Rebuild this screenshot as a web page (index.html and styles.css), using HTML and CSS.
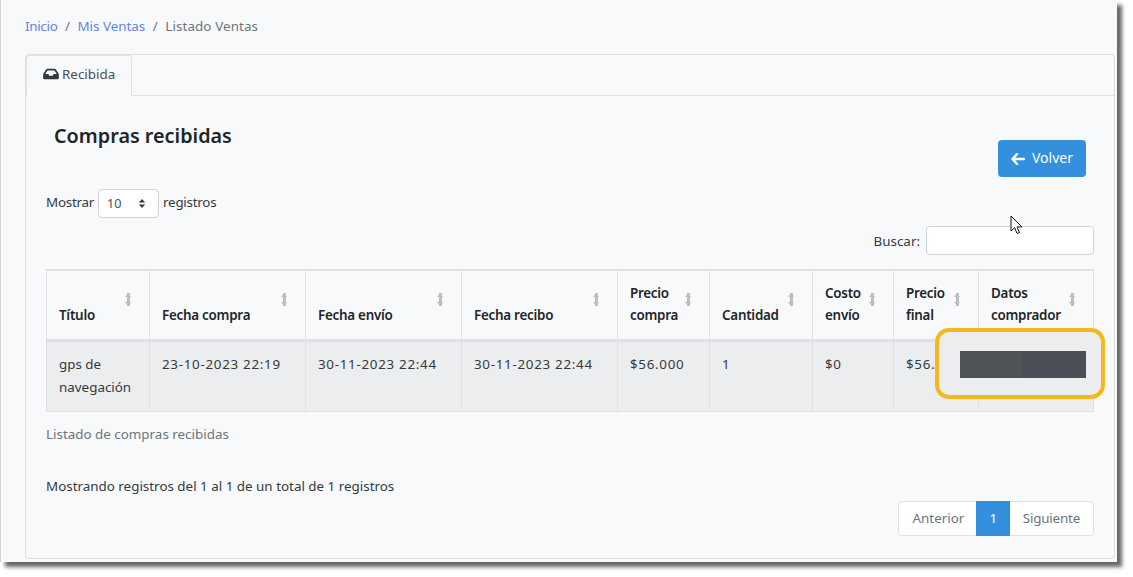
FILE: index.html
```html
<!DOCTYPE html>
<html lang="es">
<head>
<meta charset="utf-8">
<title>Listado Ventas</title>
<link rel="stylesheet" href="styles.css">
</head>
<body>
<main class="frame">
  <nav class="crumbs"><a class="first" href="#">Inicio</a><span class="sep">/</span><a href="#">Mis Ventas</a><span class="sep">/</span><span class="cur">Listado Ventas</span></nav>
  <section class="card">
    <div class="tabs">
      <div class="tab">
        <svg class="tab-ico" viewBox="0 0 576 512"><path d="M567.9 243.1L462.7 85.3A48 48 0 0 0 422.7 64H153.3a48 48 0 0 0-40 21.4L8.1 243.1A48 48 0 0 0 0 269.7V400a48 48 0 0 0 48 48h480a48 48 0 0 0 48-48V269.7a48 48 0 0 0-8.1-26.6zM162.9 128h250.3l85.3 128H384l-32 64H224l-32-64H77.5z" fill="currentColor"/></svg>
        <span>Recibida</span>
      </div>
    </div>
    <div class="body">
      <div class="head-row">
        <h2 class="title">Compras recibidas</h2>
        <button class="back">
          <svg class="back-ico" viewBox="0 0 14 12"><path d="M6 1L1.5 6 6 11M2 6h11" fill="none" stroke="currentColor" stroke-width="2.4" stroke-linecap="round" stroke-linejoin="round"/></svg>
          <span>Volver</span>
        </button>
      </div>
      <div class="length"><span class="lbl">Mostrar</span>
        <div class="select"><span>10</span>
          <svg class="sel-ico" viewBox="0 0 10 12"><path d="M5 .5L9 4.6H1zM5 11.5L1 7.4h8z" fill="currentColor"/></svg>
        </div>
        <span class="lbl">registros</span></div>
      <div class="search"><label>Buscar:</label><div class="input"></div></div>
      <table class="grid">
        <colgroup>
          <col class="c1"><col class="c2"><col class="c2"><col class="c2"><col class="c3"><col class="c4"><col class="c5"><col class="c6"><col class="c7">
        </colgroup>
        <thead>
          <tr>
            <th><div class="th"><span>Título</span><i class="sort"></i></div></th>
            <th><div class="th"><span>Fecha compra</span><i class="sort"></i></div></th>
            <th><div class="th"><span>Fecha envío</span><i class="sort"></i></div></th>
            <th><div class="th"><span>Fecha recibo</span><i class="sort"></i></div></th>
            <th><div class="th"><span>Precio<br>compra</span><i class="sort"></i></div></th>
            <th><div class="th"><span>Cantidad</span><i class="sort"></i></div></th>
            <th><div class="th"><span>Costo<br>envío</span><i class="sort"></i></div></th>
            <th><div class="th"><span>Precio<br>final</span><i class="sort"></i></div></th>
            <th><div class="th"><span>Datos<br>comprador</span><i class="sort"></i></div></th>
          </tr>
        </thead>
        <tbody>
          <tr>
            <td>gps de<br>navegación</td>
            <td class="num">23-10-2023 22:19</td>
            <td class="num">30-11-2023 22:44</td>
            <td class="num">30-11-2023 22:44</td>
            <td class="num">$56.000</td>
            <td>1</td>
            <td class="num">$0</td>
            <td class="num clip">$56.000</td>
            <td></td>
          </tr>
        </tbody>
      </table>
      <p class="caption">Listado de compras recibidas</p>
      <p class="info">Mostrando registros del 1 al 1 de un total de 1 registros</p>
      <div class="pager-row">
        <div class="pager"><span class="pg prev">Anterior</span><span class="pg on">1</span><span class="pg next">Siguiente</span></div>
      </div>
    </div>
  </section>
  <div class="mark"></div>
  <div class="redact"></div>
  <svg class="cursor" viewBox="0 0 13 20"><path d="M1 1v15l3.6-3.3 2.5 5.8 2.4-1-2.5-5.6h4.9z" fill="#fff" stroke="#111" stroke-width="1"/></svg>
</main>
</body>
</html>
```
FILE: styles.css
```css
* { box-sizing: border-box; }
html, body { margin: 0; padding: 0; background: #fff; }
body { width: 1133px; height: 577px; overflow: hidden; font-family: "Noto Sans", sans-serif; font-size: 13.4px; color: #343a40; }
.frame { position: relative; width: 1117px; height: 562px; background: #f8f9fb; border-left: 1px solid #d4d4d6; padding: 16px 2px 0 24px; box-shadow: 5px 5px 4px #666; }
.crumbs { height: 20px; line-height: 20px; display: flex; color: #6c757d; }
.crumbs a { color: #5f85e0; text-decoration: none; }
.crumbs .first { letter-spacing: -.3px; }
.crumbs .cur { letter-spacing: .1px; }
.sep { margin: 0 7.5px; color: #6c757d; }
.card { margin-top: 18px; height: 505px; border: 1px solid #dcdee2; border-radius: 4px; }
.tabs { height: 41px; border-bottom: 1px solid #dee2e6; display: flex; }
.tab { width: 106px; height: 41px; border: 1px solid #dee2e6; border-bottom-color: #f8f9fb; border-radius: 4px 4px 0 0; display: flex; align-items: center; padding-left: 16px; padding-bottom: 4px; gap: 3px; color: #495057; }
.tab-ico { width: 16px; height: 14px; color: #343a40; }
.body { padding: 0 20px 0 20px; }
.head-row { height: 92px; display: flex; justify-content: space-between; padding: 26px 8px 0 8px; }
.title { margin: 0; font-size: 19.8px; font-weight: 600; line-height: 28px; color: #212529; }
.back { margin-top: 18px; width: 88px; height: 37px; padding-bottom: 4px; background: #3490dc; border: 0; border-radius: 4px; color: #fff; font: inherit; font-size: 14px; display: flex; align-items: center; justify-content: center; gap: 7px; }
.back-ico { width: 14px; height: 12px; margin-top: 4px; }
.length { height: 29px; display: flex; align-items: flex-start; gap: 4px; color: #343a40; }
.lbl { line-height: 28px; letter-spacing: -.25px; }
.select { width: 61px; height: 29px; margin-top: 1px; border: 1px solid #ced4da; border-radius: 4px; background: #fff; display: flex; align-items: center; justify-content: space-between; padding: 0 12px 0 8px; color: #495057; font-size: 12.6px; }
.sel-ico { width: 8px; height: 11px; color: #343a40; }
.search { margin-top: 9px; height: 29px; display: flex; justify-content: flex-end; align-items: center; gap: 6px; }
.input { width: 168px; height: 29px; border: 1px solid #ced4da; border-radius: 4px; background: #fff; }
.grid { margin-top: 14px; width: 1047px; table-layout: fixed; border-collapse: collapse; border: 1px solid #dee2e6; border-top: 2px solid #dee2e6; }
.c1 { width: 103px; } .c2 { width: 156px; } .c3 { width: 92px; } .c4 { width: 103px; } .c5 { width: 81px; } .c6 { width: 85px; } .c7 { width: 115px; }
.grid th { height: 69px; padding: 11px 12px 13px; vertical-align: bottom; border: 1px solid #dee2e6; border-bottom: 3px solid #dee2e6; font-weight: 600; text-align: left; line-height: 22px; color: #212529; letter-spacing: -.25px; }
.th { display: flex; justify-content: space-between; align-items: flex-end; position: relative; }
.sort { position: absolute; right: 5px; bottom: 20px; width: 7px; height: 13px; background: linear-gradient(#bcbfc2, #bcbfc2) center/3px 100% no-repeat; }
.sort::before, .sort::after { content: ""; position: absolute; left: 0; border-left: 3.5px solid transparent; border-right: 3.5px solid transparent; }
.sort::before { top: 0; border-bottom: 4px solid #bcbfc2; }
.sort::after { bottom: 0; border-top: 4px solid #bcbfc2; }
.grid td { height: 69px; padding: 11px 12px 12px; vertical-align: top; background: #ecedef; border: 1px solid #dee2e6; line-height: 23px; }
.grid td.num { letter-spacing: .7px; }
.clip { white-space: nowrap; }
.caption { margin: 12px 0 0; height: 20px; line-height: 20px; color: #6c757d; }
.info { margin: 32px 0 0; height: 20px; line-height: 20px; color: #343a40; }
.pager-row { margin-top: 5px; display: flex; justify-content: flex-end; }
.pager { height: 35px; display: flex; border: 1px solid #dee2e6; border-radius: 4px; background: #fff; color: #6c757d; line-height: 33px; }
.pg { padding: 0 12.5px; }
.prev { padding-left: 13px; padding-right: 12px; }
.next { letter-spacing: -.2px; padding-right: 13px; }
.pg.on { background: #3490dc; color: #fff; margin: -1px 0; line-height: 35px; width: 34px; padding: 0; text-align: center; }
.mark { position: absolute; left: 934px; top: 328px; width: 170px; height: 71px; background: #ecedee; border: 4px solid #f4b81e; border-radius: 14px; }
.redact { position: absolute; left: 959px; top: 351px; width: 126px; height: 27px; background: linear-gradient(90deg, #505356 50%, #4a4f57 50%); }
.cursor { position: absolute; left: 1009px; top: 215px; width: 13px; height: 20px; }
```
